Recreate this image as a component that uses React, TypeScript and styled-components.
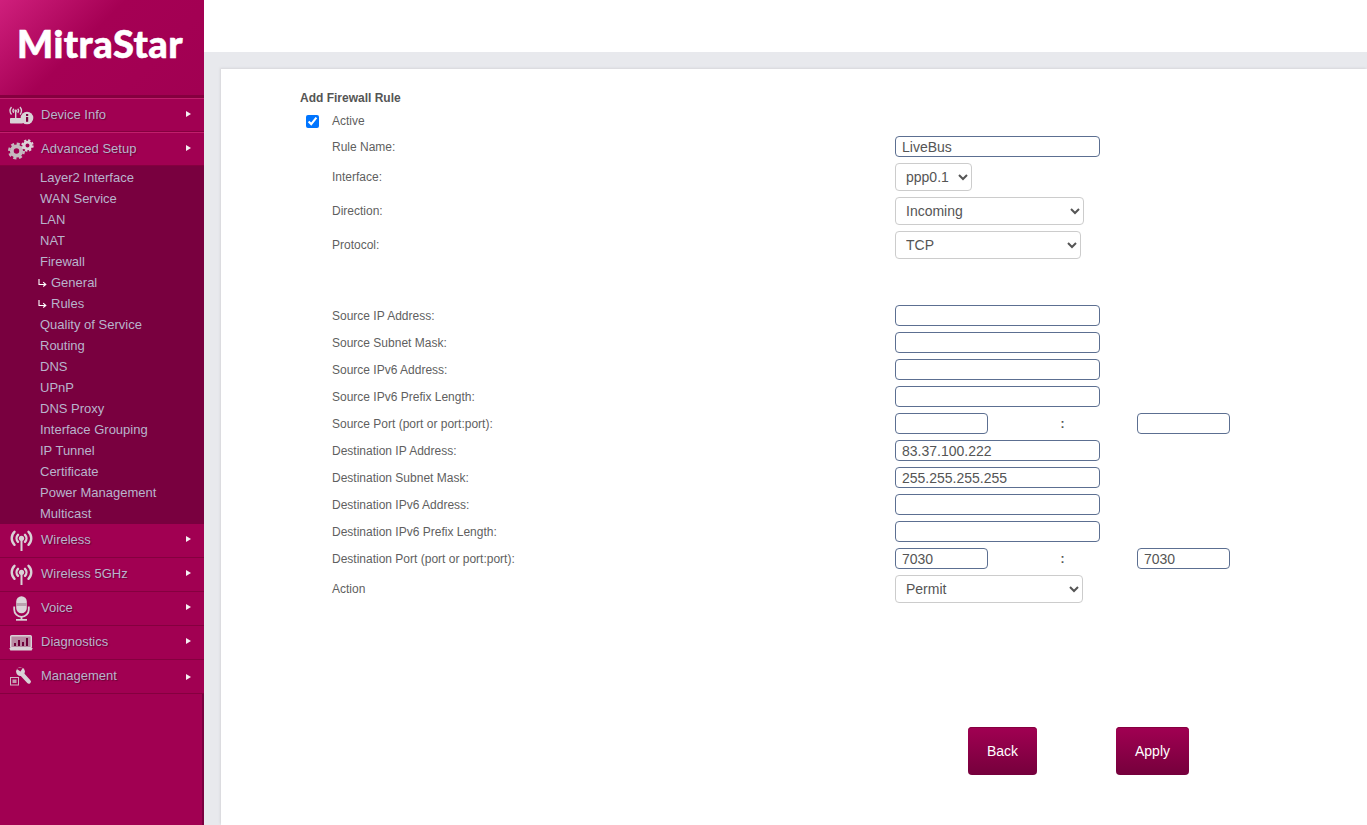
import React, {FC} from 'react';
import styled, {createGlobalStyle} from 'styled-components';

const GlobalStyle = createGlobalStyle`
    html, body {
        margin: 0;
        padding: 0;
        height: 100%;
        background: #e8e9ed;
        font-family: "Liberation Sans", Arial, sans-serif;
    }
`;

const Page = styled.div`
    display: flex;
    width: 1367px;
    height: 825px;
    overflow: hidden;
`;

const Sidebar = styled.aside`
    flex: 0 0 204px;
    display: flex;
    flex-direction: column;
    background: #a10052;
    box-shadow: inset -2px 0 0 #7a0040;
`;

const LogoBlock = styled.div`
    height: 98px;
    display: flex;
    align-items: center;
    padding-left: 17px;
    padding-bottom: 9px;
    box-sizing: border-box;
    background: linear-gradient(135deg, #cf1f7c 0%, #a50054 42%, #a10052 100%);
    border-bottom: 3px solid #85003f;
`;

const Logo = styled.div`
    color: #fff;
    font-family: "Lato", sans-serif;
    font-weight: 900;
    font-size: 38px;
    letter-spacing: 0.5px;
    line-height: 1;
    -webkit-text-stroke: 0.6px #fff;
`;

const NavItem = styled.div`
    position: relative;
    height: 34px;
    box-sizing: border-box;
    display: flex;
    align-items: center;
    background: #a10052;
    border-top: 1px solid #c01f6c;
    border-bottom: 1px solid #85003f;
`;

const PlainItem = styled(NavItem)`
    border-top: 0;
`;

const IconSlot = styled.span`
    flex: 0 0 41px;
    height: 32px;
    display: flex;
    align-items: center;
    justify-content: center;
    padding-left: 1px;
    box-sizing: border-box;
`;

const NavLabel = styled.span`
    color: #b8b4cc;
    font-size: 13px;
    padding-bottom: 2px;
    text-shadow: 1px 1px 1px #6c0036;
`;

const Caret = styled.span<{$top?: number}>`
    position: absolute;
    right: 13px;
    top: ${(props) => props.$top ?? 12}px;
    width: 0;
    height: 0;
    border-left: 5px solid #f4f0f2;
    border-top: 3px solid transparent;
    border-bottom: 3px solid transparent;
`;

const SubMenu = styled.div`
    background: #79003f;
    height: 358px;
    padding-top: 1px;
    box-sizing: border-box;
`;

const SubItem = styled.div<{$nested?: boolean}>`
    height: 21px;
    display: flex;
    align-items: center;
    gap: 4px;
    padding-left: ${(props) => (props.$nested ? '38px' : '40px')};
    color: #b8b4cc;
    font-size: 13px;
`;

const Main = styled.main`
    flex: 1;
    display: flex;
    flex-direction: column;
`;

const TopBar = styled.div`
    height: 52px;
    background: #fff;
`;

const Gutter = styled.div`
    flex: 1;
    padding: 17px 0 0 17px;
    min-height: 0;
`;

const Content = styled.section`
    height: 100%;
    background: #fff;
    box-shadow: -1px -1px 2px #d6d6da;
    padding: 22px 0 0 79px;
    box-sizing: border-box;
`;

const Title = styled.h1`
    margin: 0;
    font-size: 12px;
    line-height: 14px;
    font-weight: bold;
    color: #555;
`;

const ActiveRow = styled.label`
    display: flex;
    align-items: center;
    height: 16px;
    margin-top: 8px;
    padding-left: 6px;
    font-size: 12px;
    color: #5f5f5f;
`;

const Check = styled.input`
    width: 13px;
    height: 13px;
    margin: 0 13px 0 0;
`;

const Form = styled.div`
    display: flex;
    flex-direction: column;
    gap: 6px;
    margin-top: 7px;
    padding-left: 32px;
`;

const Row = styled.div<{$gapBefore?: number}>`
    display: flex;
    align-items: center;
    margin-top: ${(props) => props.$gapBefore ?? 0}px;
`;

const Label = styled.span`
    flex: 0 0 563px;
    font-size: 12px;
    color: #5f5f5f;
`;

const TextInput = styled.input<{$w?: number}>`
    width: ${(props) => props.$w ?? 205}px;
    height: 21px;
    box-sizing: border-box;
    border: 1px solid #5c6f91;
    border-radius: 4px;
    padding: 0 6px;
    background: #fff;
    font: 14px "Liberation Sans", Arial, sans-serif;
    color: #555;
    outline: none;
`;

const Select = styled.select<{$w: number}>`
    width: ${(props) => props.$w}px;
    height: 28px;
    box-sizing: border-box;
    border: 1px solid #ccc;
    border-radius: 4px;
    padding: 0 6px;
    background: #fff;
    font: 14px "Liberation Sans", Arial, sans-serif;
    color: #555;
`;

const Colon = styled.span`
    flex: 0 0 149px;
    text-align: center;
    font-size: 12px;
    font-weight: bold;
    color: #555;
`;

const Actions = styled.div`
    display: flex;
    gap: 79px;
    margin-top: 124px;
    padding-left: 668px;
`;

const Button = styled.button<{$w: number}>`
    width: ${(props) => props.$w}px;
    height: 48px;
    border: 0;
    border-radius: 4px;
    background: linear-gradient(#a10052, #75003c);
    color: #fff;
    font: 14px "Liberation Sans", Arial, sans-serif;
    box-shadow: inset 0 1px 0 #85003f;
`;

const ic = '#d9d2d6';
const navBg = '#a10052';

const DeviceIcon = () => (
    <svg width="25" height="19" viewBox="0 0 25 19">
        <g fill="none" stroke={ic} strokeWidth="1.300">
            <path d="M2.500 1a6 6 0 0 0 0 7.500" />
            <path d="M11 1a6 6 0 0 1 0 7.500" />
            <path d="M4.800 2.800a3 3 0 0 0 0 4" />
            <path d="M8.700 2.800a3 3 0 0 1 0 4" />
        </g>
        <circle cx="6.700" cy="4.800" r="1.300" fill={ic} />
        <rect x="6" y="5" width="1.400" height="7" fill={ic} />
        <rect x="1" y="12" width="13" height="5.500" rx="0.800" fill={ic} />
        <circle cx="18" cy="12" r="6.300" fill={ic} />
        <rect x="17" y="11" width="2.200" height="4.800" fill="#7f0042" />
        <rect x="17" y="8" width="2.200" height="2" fill="#7f0042" />
    </svg>
);

const Gear: FC<{cx: number; cy: number; r: number; color: string}> = ({cx, cy, r, color}) => {
    const toothRadius = r * 0.86;
    const period = (2 * Math.PI * toothRadius) / 8;
    return (
        <g>
            <circle cx={cx} cy={cy} r={r * 0.55} fill='none' stroke={color} strokeWidth={r * 0.45} />
            <circle
                cx={cx}
                cy={cy}
                r={toothRadius}
                fill='none'
                stroke={color}
                strokeWidth={r * 0.28}
                strokeDasharray={`${period * 0.55} ${period * 0.45}`}
            />
        </g>
    );
};

const GearsIcon = () => (
    <svg width="26" height="21" viewBox="0 0 26 21">
        <Gear cx={8.500} cy={12} r={8.500} color='#c4b9bf' />
        <Gear cx={19.500} cy={6.500} r={6.200} color='#dcd5d9' />
    </svg>
);

const WirelessIcon = () => (
    <svg width="23" height="21" viewBox="0 0 23 21">
        <g fill="none" stroke={ic} strokeWidth="2.400" strokeLinecap="round">
            <path d="M4.500 1.800a9 9 0 0 0 0 13" />
            <path d="M18.500 1.800a9 9 0 0 1 0 13" />
            <path d="M8 4.800a5 5 0 0 0 0 7" />
            <path d="M15 4.800a5 5 0 0 1 0 7" />
        </g>
        <circle cx="11.500" cy="8.300" r="2.600" fill={ic} />
        <rect x="10.500" y="9" width="2" height="12" fill={ic} />
    </svg>
);

const MicIcon = () => (
    <svg width="17" height="25" viewBox="0 0 17 25">
        <rect x="3.200" y="0.300" width="10.600" height="17" rx="5.300" fill="#dcd5d9" />
        <rect x="3.200" y="7" width="10.600" height="3" fill="#b9a3ae" />
        <path d="M1.200 10.500v3a7.300 7.300 0 0 0 14.600 0v-3" fill="none" stroke={ic} strokeWidth="1.800" />
        <rect x="7.600" y="20" width="1.800" height="3.500" fill={ic} />
        <rect x="3" y="23" width="11" height="1.700" fill={ic} />
    </svg>
);

const DiagIcon = () => (
    <svg width="24" height="16" viewBox="0 0 24 16">
        <rect x="1.700" y="0.700" width="20.600" height="12" rx="1" fill="#b98aa2" stroke={ic} strokeWidth="1.400" />
        <path d="M5 11h2V8H5zM9 11h2V5H9zM13 11h2V7h-2zM17 11h2V3h-2z" fill="#6d0038" />
        <path d="M0.300 13h23.400l-1 2.500H1.300z" fill={ic} />
    </svg>
);

const ToolIcon = () => (
    <svg width="22" height="19" viewBox="0 0 22 19">
        <path d="M10.500 5.500L18.800 14.600" fill="none" stroke={ic} strokeWidth="4.200" strokeLinecap="round" />
        <circle cx="10.500" cy="4.600" r="4.400" fill={ic} />
        <path d="M6 1.500L10.500 4.400 13.400 0z" fill={navBg} />
        <rect x="0.500" y="10.500" width="8" height="7.500" fill="none" stroke="#cfb6c3" strokeWidth="1" />
        <rect x="2.500" y="12.500" width="4" height="3.500" fill="#c49ab0" />
    </svg>
);

const SubArrow = () => (
    <svg width="9" height="8" viewBox="0 0 9 8">
        <path d="M1 0v5.500h6M5.200 3.200L7.800 5.500 5.200 7.500" fill="none" stroke="#fff" strokeWidth="1.100" />
    </svg>
);

const subItems = [
    {name: 'Layer2 Interface'},
    {name: 'WAN Service'},
    {name: 'LAN'},
    {name: 'NAT'},
    {name: 'Firewall'},
    {name: 'General', nested: true},
    {name: 'Rules', nested: true},
    {name: 'Quality of Service'},
    {name: 'Routing'},
    {name: 'DNS'},
    {name: 'UPnP'},
    {name: 'DNS Proxy'},
    {name: 'Interface Grouping'},
    {name: 'IP Tunnel'},
    {name: 'Certificate'},
    {name: 'Power Management'},
    {name: 'Multicast'},
];

const textRows = [
    {label: 'Source IP Address:', value: ''},
    {label: 'Source Subnet Mask:', value: ''},
    {label: 'Source IPv6 Address:', value: ''},
    {label: 'Source IPv6 Prefix Length:', value: ''},
];

const destRows = [
    {label: 'Destination IP Address:', value: '83.37.100.222'},
    {label: 'Destination Subnet Mask:', value: '255.255.255.255'},
    {label: 'Destination IPv6 Address:', value: ''},
    {label: 'Destination IPv6 Prefix Length:', value: ''},
];

const PortRow: FC<{label: string; from?: string; to?: string}> = ({label, from = '', to = ''}) => (
    <Row>
        <Label>{label}</Label>
        <TextInput $w={93} defaultValue={from} />
        <Colon>{':'}</Colon>
        <TextInput $w={93} defaultValue={to} />
    </Row>
);

const App: FC = () => (
    <Page>
        <GlobalStyle />
        <Sidebar>
            <LogoBlock>
                <Logo>{'MitraStar'}</Logo>
            </LogoBlock>
            <NavItem>
                <IconSlot><DeviceIcon /></IconSlot>
                <NavLabel>{'Device Info'}</NavLabel>
                <Caret />
            </NavItem>
            <NavItem>
                <IconSlot><GearsIcon /></IconSlot>
                <NavLabel>{'Advanced Setup'}</NavLabel>
                <Caret />
            </NavItem>
            <SubMenu>
                {subItems.map((item) => (
                    <SubItem key={item.name} $nested={item.nested}>
                        {item.nested && <SubArrow />}
                        {item.name}
                    </SubItem>
                ))}
            </SubMenu>
            <PlainItem>
                <IconSlot><WirelessIcon /></IconSlot>
                <NavLabel>{'Wireless'}</NavLabel>
                <Caret />
            </PlainItem>
            <PlainItem>
                <IconSlot><WirelessIcon /></IconSlot>
                <NavLabel>{'Wireless 5GHz'}</NavLabel>
                <Caret />
            </PlainItem>
            <PlainItem>
                <IconSlot><MicIcon /></IconSlot>
                <NavLabel>{'Voice'}</NavLabel>
                <Caret />
            </PlainItem>
            <PlainItem>
                <IconSlot><DiagIcon /></IconSlot>
                <NavLabel>{'Diagnostics'}</NavLabel>
                <Caret />
            </PlainItem>
            <PlainItem>
                <IconSlot><ToolIcon /></IconSlot>
                <NavLabel>{'Management'}</NavLabel>
                <Caret $top={14} />
            </PlainItem>
        </Sidebar>
        <Main>
            <TopBar />
            <Gutter>
                <Content>
                    <Title>{'Add Firewall Rule'}</Title>
                    <ActiveRow>
                        <Check type='checkbox' defaultChecked={true} />
                        {'Active'}
                    </ActiveRow>
                    <Form>
                        <Row>
                            <Label>{'Rule Name:'}</Label>
                            <TextInput defaultValue='LiveBus' />
                        </Row>
                        <Row>
                            <Label>{'Interface:'}</Label>
                            <Select $w={77}><option>{'ppp0.1'}</option></Select>
                        </Row>
                        <Row>
                            <Label>{'Direction:'}</Label>
                            <Select $w={189}><option>{'Incoming'}</option></Select>
                        </Row>
                        <Row>
                            <Label>{'Protocol:'}</Label>
                            <Select $w={186}><option>{'TCP'}</option></Select>
                        </Row>
                        {textRows.map((row, i) => (
                            <Row key={row.label} $gapBefore={i === 0 ? 40 : 0}>
                                <Label>{row.label}</Label>
                                <TextInput defaultValue={row.value} />
                            </Row>
                        ))}
                        <PortRow label='Source Port (port or port:port):' />
                        {destRows.map((row) => (
                            <Row key={row.label}>
                                <Label>{row.label}</Label>
                                <TextInput defaultValue={row.value} />
                            </Row>
                        ))}
                        <PortRow label='Destination Port (port or port:port):' from='7030' to='7030' />
                        <Row>
                            <Label>{'Action'}</Label>
                            <Select $w={188}><option>{'Permit'}</option></Select>
                        </Row>
                    </Form>
                    <Actions>
                        <Button $w={69}>{'Back'}</Button>
                        <Button $w={73}>{'Apply'}</Button>
                    </Actions>
                </Content>
            </Gutter>
        </Main>
    </Page>
);

export default App;
